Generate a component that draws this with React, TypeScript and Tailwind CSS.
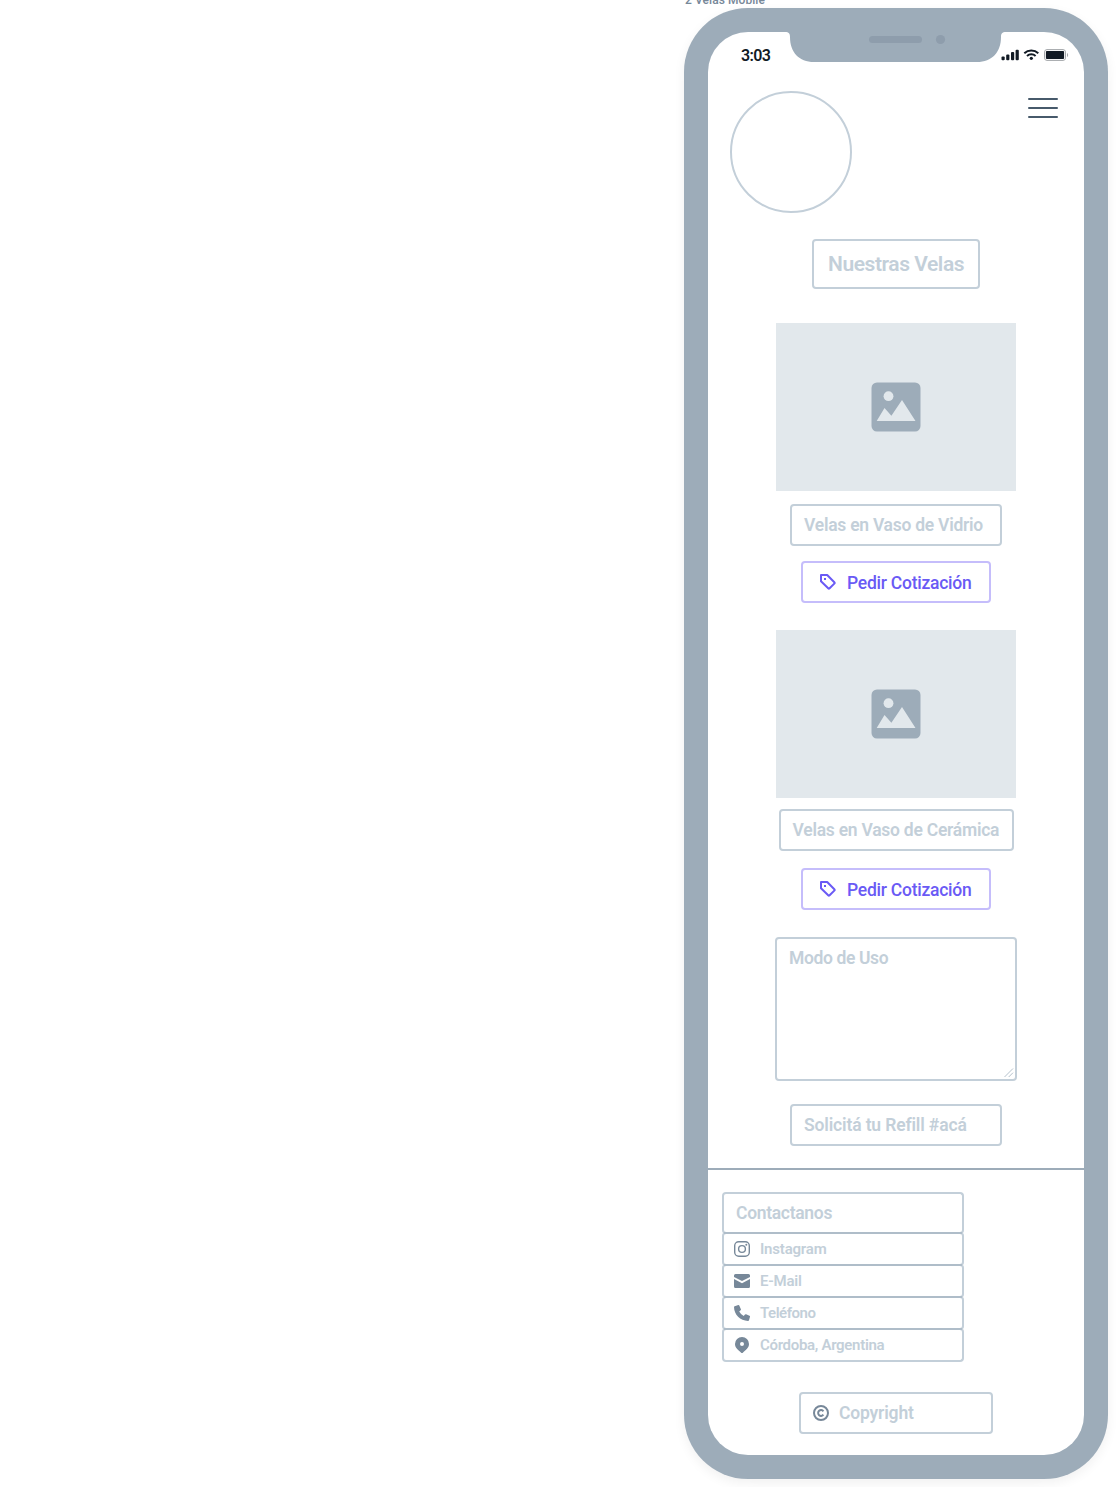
import type { ReactNode } from "react";

function Field({ className, children }: { className: string; children: ReactNode }) {
  return (
    <div
      className={`flex shrink-0 whitespace-nowrap rounded-[4px] border-2 border-[#c3cfd9] font-semibold text-[#c3cfd9] ${className}`}
    >
      {children}
    </div>
  );
}

function PictureBox({ className }: { className: string }) {
  return (
    <div className={`flex h-[168px] w-60 shrink-0 items-center justify-center bg-[#e2e8ec] ${className}`}>
      <svg width="50" height="50" viewBox="0 0 50 50">
        <rect x="0.5" y="0.5" width="49" height="49" rx="5.5" fill="#9dacb9" />
        <circle cx="17.5" cy="14.2" r="4.9" fill="#e2e8ec" />
        <path d="M5.7 39 13.5 26l6.9 7.7L31 18l13.5 21Z" fill="#e2e8ec" />
      </svg>
    </div>
  );
}

function QuoteButton({ className }: { className: string }) {
  return (
    <button
      className={`flex h-[42px] w-[190px] shrink-0 items-center rounded-[4px] border-2 border-[#c5bdfb] pl-[17px] text-[17.5px] font-medium tracking-[-0.25px] text-[#6a5af5] ${className}`}
    >
      <svg width="16" height="16" viewBox="0 0 16 16" className="mr-[11px]" fill="none" stroke="currentColor" strokeWidth="2">
        <path d="M1 1h6.2l7.1 7.2a1 1 0 0 1 0 1.4l-4.7 4.7a1 1 0 0 1-1.4 0L1 7.2Z" strokeLinejoin="round" />
        <rect x="4" y="4" width="2" height="2" fill="currentColor" stroke="none" />
      </svg>
      <span className="pt-0.5">Pedir Cotización</span>
    </button>
  );
}

function Row({ icon, last, children, tracking }: { icon: ReactNode; last?: boolean; children: ReactNode; tracking: string }) {
  return (
    <li
      className={`-mt-0.5 flex h-[34px] items-center gap-2.5 rounded-[4px] border-2 border-x-[#c3cfd9] border-t-[#afbdc9] pl-2.5 text-[15px] font-semibold text-[#c3cfd9] ${tracking} ${
        last ? "border-b-[#c3cfd9]" : "border-b-[#afbdc9]"
      }`}
    >
      <span className="text-[#778899]">{icon}</span>
      <span>{children}</span>
    </li>
  );
}

function InstagramIcon() {
  return (
    <svg width="16" height="16" viewBox="0 0 16 16" className="block" fill="none" stroke="currentColor" strokeWidth="1.4">
      <rect x="0.7" y="0.7" width="14.6" height="14.6" rx="4" />
      <circle cx="8" cy="8" r="3.4" />
      <circle cx="12.3" cy="3.7" r="1" fill="currentColor" stroke="none" />
    </svg>
  );
}

function MailIcon() {
  return (
    <svg width="16" height="16" viewBox="0 0 16 16" className="block" fill="currentColor">
      <path d="M1.500 1h13A1.500 1.500 0 0 1 16 2.500V4L8 8.100 0 4V2.500A1.500 1.500 0 0 1 1.500 1Z" />
      <path d="M0 6 8 10.200 16 6V13.500a1.500 1.500 0 0 1-1.500 1.500h-13A1.500 1.500 0 0 1 0 13.500Z" />
    </svg>
  );
}

function PhoneIcon() {
  return (
    <svg width="16" height="16" viewBox="0 0 16 16" className="block" fill="currentColor">
      <path d="M0.7 1.2 4.3 0.1a1 1 0 0 1 1.1.6l1.5 3.5a1 1 0 0 1-.3 1.1L5.2 6.5a10.5 10.5 0 0 0 4.5 4.5l1.3-1.5a1 1 0 0 1 1.1-.3l3.4 1.500a1 1 0 0 1 .5 1.100l-1 3.400a1 1 0 0 1-1 .7C6.300 15.900 0 9.600 0 2.100a1 1 0 0 1 .7-.9Z" />
    </svg>
  );
}

function PinIcon() {
  return (
    <svg width="16" height="16" viewBox="0 0 16 16" className="block" fill="currentColor">
      <path fillRule="evenodd" d="M8 0a7 7 0 0 1 7 7c0 3.5-2.7 5.6-6.2 8.7a1.1 1.1 0 0 1-1.6 0C3.700 12.600 1 10.500 1 7a7 7 0 0 1 7-7Zm0 5a2 2 0 1 0 0 4 2 2 0 0 0 0-4Z" />
    </svg>
  );
}

function StatusIcons() {
  return (
    <svg width="68" height="12" viewBox="0 0 68 12" className="block">
      <g fill="#111a24">
        <rect x="0.5" y="7.5" width="3.2" height="3.7" rx="1" />
        <rect x="5.2" y="5.5" width="3.2" height="5.7" rx="1" />
        <rect x="10" y="3" width="3.2" height="8.2" rx="1" />
        <rect x="14.6" y="0.7" width="3.2" height="10.5" rx="1" />
        <circle cx="30.3" cy="9.3" r="1.6" />
        <rect x="44.9" y="2" width="18.2" height="8" rx="1" />
      </g>
      <path d="M23.3 4.2a10.300 10.300 0 0 1 14 0M26 7a6.300 6.300 0 0 1 8.600 0" fill="none" stroke="#111a24" strokeWidth="2" />
      <rect x="43.5" y="0.6" width="21" height="10.8" rx="2.5" fill="none" stroke="#a3a6a9" />
      <path d="M66 4v4c1.500-.8 1.500-3.200 0-4Z" fill="#a3a6a9" />
    </svg>
  );
}

function Notch() {
  return (
    <div className="absolute left-[77px] top-0 h-[30px] w-[221px]">
      <svg width="221" height="30" viewBox="0 0 221 30" className="block">
        <path d="M0 0c4 0 5 1.5 5 5 0 15 9 25 24 25h163c15 0 24-10 24-25 0-3.500 1-5 5-5Z" fill="#9dacb9" />
        <rect x="84" y="4" width="53" height="7" rx="3.5" fill="#8e9dac" />
        <circle cx="155.5" cy="7.5" r="4.6" fill="#8e9dac" />
      </svg>
    </div>
  );
}

export default function App() {
  return (
    <div className="flex h-[1487px] w-[1116px] justify-end overflow-hidden bg-white pr-2 font-['Roboto',sans-serif]">
      <div className="flex w-[424px] flex-col">
        <div className="flex h-2 shrink-0 items-end pb-0.5 pl-px text-[12px] font-medium leading-none tracking-[0.07px] text-[#778899]">
          2 Velas Mobile
        </div>
        <div className="h-[1471px] shrink-0 rounded-[64px] bg-[#9dacb9] p-6 shadow-[0_4px_12px_rgba(0,0,0,0.06)]">
          <main className="relative flex h-full flex-col items-center overflow-hidden rounded-[40px] bg-white">
            <Notch />
            <header className="flex w-full shrink-0 items-start justify-between pl-[33px] pr-[15px] pt-[15px]">
              <span className="text-[16px] font-semibold leading-[18px] tracking-[-0.6px] text-[#111a24]">3:03</span>
              <span className="pt-0.5">
                <StatusIcons />
              </span>
            </header>

            <div className="mt-[26px] flex w-full shrink-0 items-start justify-between pl-[22px] pr-[26px]">
              <div className="size-[122px] rounded-full border-2 border-[#c3cfd9]" />
              <button aria-label="Menú" className="mt-[7px] flex w-[30px] flex-col gap-[7px]">
                <span className="h-0.5 rounded-full bg-[#475a6b]" />
                <span className="h-0.5 rounded-full bg-[#475a6b]" />
                <span className="h-0.5 rounded-full bg-[#475a6b]" />
              </button>
            </div>

            <Field className="mt-[26px] h-[50px] w-[168px] items-center pl-3.5 pt-0.5 text-[21px] tracking-[-0.44px]">
              <h1>Nuestras Velas</h1>
            </Field>

            <PictureBox className="mt-[34px]" />
            <Field className="mt-[13px] h-[42px] w-[212px] items-center pl-3 text-[17.5px] tracking-[-0.26px]">
              Velas en Vaso de Vidrio
            </Field>
            <QuoteButton className="mt-[15px]" />

            <PictureBox className="mt-[27px]" />
            <Field className="mt-[11px] h-[42px] w-[235px] items-center pl-3 text-[17.5px] tracking-[-0.25px]">
              Velas en Vaso de Cerámica
            </Field>
            <QuoteButton className="mt-[17px]" />

            <Field className="mt-[27px] h-36 w-[242px] items-end justify-between pl-3 text-[17.5px] tracking-[-0.38px]">
              <span className="self-start pt-1.5">Modo de Uso</span>
              <svg width="10" height="10" viewBox="0 0 10 10" className="mb-px mr-px" stroke="#b4c1cc" strokeWidth="1">
                <path d="M0.5 9 9 0.5M4.7 9 9 4.7" />
              </svg>
            </Field>

            <Field className="mt-[23px] h-[42px] w-[212px] items-center pl-3 text-[17.5px] tracking-[-0.15px]">
              Solicitá tu Refill #acá
            </Field>

            <footer className="mt-[22px] flex w-full shrink-0 flex-col items-center border-t-2 border-[#9dacb9] pt-[22px]">
              <section className="ml-3.5 w-[242px] self-start">
                <h2 className="flex h-[42px] items-center rounded-[4px] border-2 border-[#c3cfd9] border-b-[#afbdc9] pl-3 text-[17.5px] font-semibold tracking-[-0.31px] text-[#c3cfd9]">
                  Contactanos
                </h2>
                <ul>
                  <Row icon={<InstagramIcon />} tracking="tracking-[-0.2px]">Instagram</Row>
                  <Row icon={<MailIcon />} tracking="tracking-[-0.2px]">E-Mail</Row>
                  <Row icon={<PhoneIcon />} tracking="tracking-[-0.48px]">Teléfono</Row>
                  <Row icon={<PinIcon />} last tracking="tracking-[-0.31px]">Córdoba, Argentina</Row>
                </ul>
              </section>
              <Field className="mt-[30px] h-[42px] w-[194px] items-center gap-2.5 pl-3 text-[17.5px] tracking-[-0.17px]">
                <svg width="16" height="16" viewBox="0 0 16 16" fill="none" stroke="#778899" strokeWidth="2">
                  <circle cx="8" cy="8" r="7" />
                  <path d="M10.4 6.3a2.900 2.900 0 1 0 0 3.400" />
                </svg>
                <span>Copyright</span>
              </Field>
            </footer>
          </main>
        </div>
      </div>
    </div>
  );
}
